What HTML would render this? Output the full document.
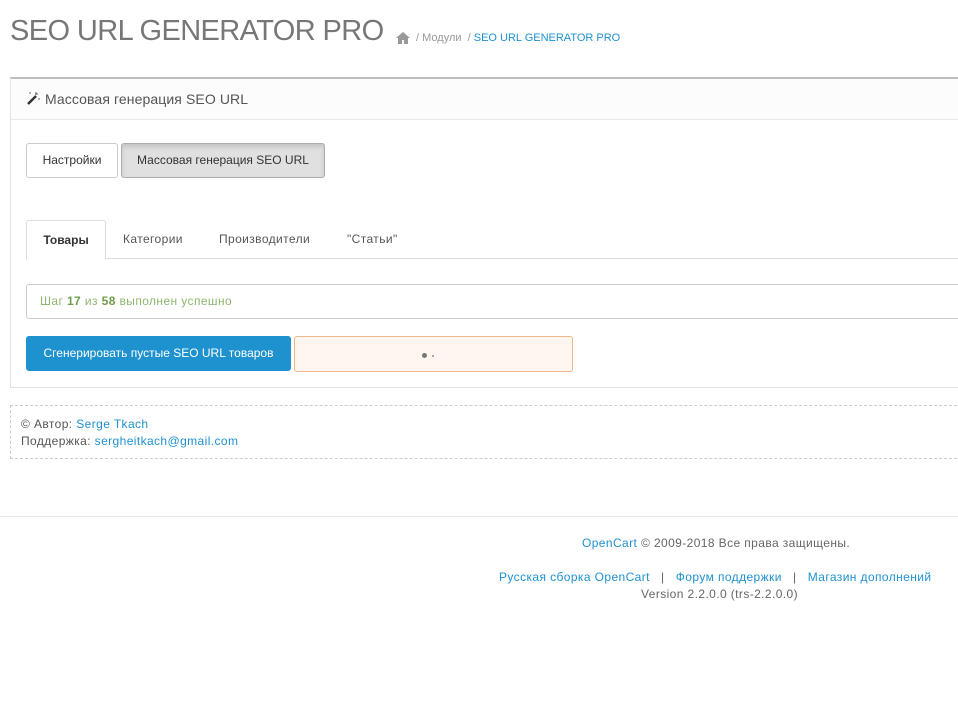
<!DOCTYPE html>
<html><head><meta charset="utf-8"><style>
body{margin:0;width:958px;height:719px;background:#fff;font-family:"Liberation Sans","DejaVu Sans",sans-serif;color:#666;overflow:hidden;position:relative;font-size:12px;letter-spacing:0.4px}
.abs{position:absolute;white-space:nowrap}
a{color:#1e91cf;text-decoration:none}
</style></head><body>
<div class="abs" style="left:10px;top:15px;font-size:29px;color:#777;letter-spacing:-0.6px">SEO URL GENERATOR PRO</div>
<svg class="abs" style="left:396px;top:32px" width="14" height="12" viewBox="0 0 14 12"><path d="M7 0L0 6h2v6h4V8h2v4h4V6h2z" fill="#999"/></svg>
<div class="abs" style="left:416px;top:32px;font-size:11px;color:#999;letter-spacing:0">/ Модули &nbsp;/ <a>SEO URL GENERATOR PRO</a></div>

<div class="abs" style="left:10px;top:77px;width:960px;height:308px;border:1px solid #e2e2e2;border-top:2px solid #bfbfbf"></div>
<div class="abs" style="left:11px;top:79px;width:960px;height:40px;background:#fcfcfc;border-bottom:1px solid #e8e8e8"></div>
<svg class="abs" style="left:26px;top:91px" width="14" height="14" viewBox="0 0 14 14"><path d="M2 13L10 5" stroke="#333" stroke-width="2.5"/><path d="M10 1v3M12 3h-3M4 1v2M13 7v2" stroke="#666" stroke-width="1"/></svg>
<div class="abs" style="left:45px;top:91px;font-size:14px;color:#555;letter-spacing:0.1px">Массовая генерация SEO URL</div>

<div class="abs" style="left:26px;top:143px;width:90px;height:33px;border:1px solid #ccc;border-radius:3px;font-size:12px;color:#333;line-height:33px;text-align:center;letter-spacing:0">Настройки</div>
<div class="abs" style="left:121px;top:143px;width:202px;height:33px;border:1px solid #adadad;border-radius:3px;background:#e0e0e0;box-shadow:inset 0 3px 5px rgba(0,0,0,.12);font-size:12px;color:#333;line-height:33px;text-align:center;letter-spacing:0">Массовая генерация SEO URL</div>

<div class="abs" style="left:26px;top:258px;width:940px;border-top:1px solid #ddd"></div>
<div class="abs" style="left:26px;top:220px;width:78px;height:38px;border:1px solid #ddd;border-bottom:1px solid #fff;border-radius:3px 3px 0 0;background:#fff;font-weight:bold;color:#333;line-height:38px;text-align:center;letter-spacing:0">Товары</div>
<div class="abs" style="left:123px;top:232px;color:#555">Категории</div>
<div class="abs" style="left:219px;top:232px;color:#555">Производители</div>
<div class="abs" style="left:347px;top:232px;color:#555">"Статьи"</div>

<div class="abs" style="left:26px;top:284px;width:940px;height:33px;border:1px solid #ccc;border-radius:3px"></div>
<div class="abs" style="left:40px;top:294px;color:#8fb56f">Шаг <b style="color:#6f9d4c">17</b> из <b style="color:#6f9d4c">58</b> выполнен успешно</div>

<div class="abs" style="left:26px;top:336px;width:265px;height:35px;background:#1e91cf;border-radius:3px;color:#fff;line-height:35px;text-align:center;letter-spacing:0">Сгенерировать пустые SEO URL товаров</div>
<div class="abs" style="left:294px;top:336px;width:277px;height:34px;background:#fff6ef;border:1px solid #f0b88a;border-radius:3px"></div>
<div class="abs" style="left:422px;top:353px;width:5px;height:5px;border-radius:50%;background:#777"></div>
<div class="abs" style="left:432px;top:355px;width:2px;height:2px;background:#aaa"></div>

<div class="abs" style="left:10px;top:405px;width:960px;height:52px;border:1px dashed #ccc"></div>
<div class="abs" style="left:21px;top:417px;color:#555">© Автор: <a>Serge Tkach</a></div>
<div class="abs" style="left:21px;top:434px;color:#555">Поддержка: <a>sergheitkach@gmail.com</a></div>

<div class="abs" style="left:0;top:516px;width:958px;border-top:1px solid #e8e8e8"></div>
<div class="abs" style="left:582px;top:536px;color:#666">
<a>OpenCart</a> © 2009-2018 Все права защищены.</div>
<div class="abs" style="left:499px;top:570px;color:#666"><a>Русская сборка OpenCart</a> &nbsp; | &nbsp; <a>Форум поддержки</a> &nbsp; | &nbsp; <a>Магазин дополнений</a></div>
<div class="abs" style="left:641px;top:587px;color:#666">Version 2.2.0.0 (trs-2.2.0.0)</div>
</body></html>
